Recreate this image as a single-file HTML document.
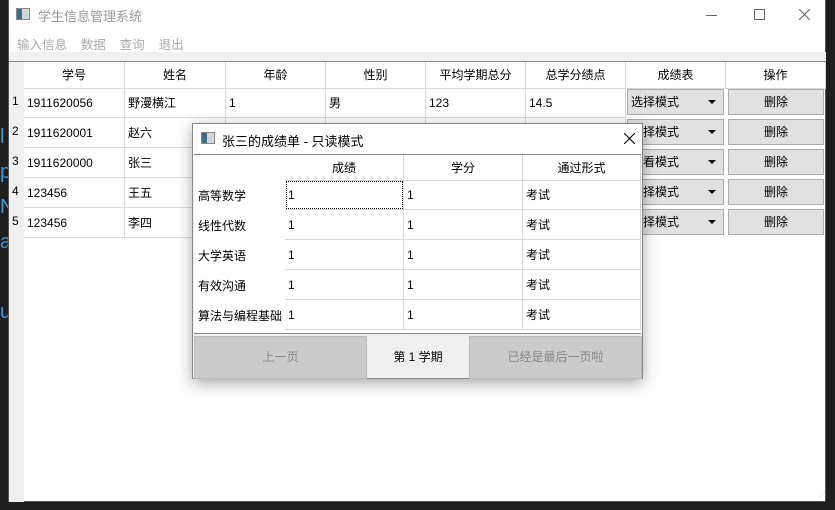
<!DOCTYPE html>
<html><head><meta charset="utf-8"><style>
*{margin:0;padding:0;box-sizing:border-box}
body{width:835px;height:510px;background:#1e1e1e;position:relative;overflow:hidden;font-family:"Liberation Sans","Microsoft YaHei","Noto Sans CJK SC",sans-serif;font-size:12px;color:#000}
.a{position:absolute}
.win{left:8px;top:0;width:818px;height:502px;background:#fff;border:1px solid #555;border-top:none}
.cell{position:absolute;height:30px;line-height:30px;white-space:nowrap;overflow:hidden;border-right:1px solid #d8d8d8;border-bottom:1px solid #d8d8d8}
.hd{text-align:center;height:27px;line-height:26px}
.combo{position:absolute;background:#e1e1e1;border:1px solid #adadad;height:26px;line-height:24px;padding-left:3px}
.btn{position:absolute;background:#e1e1e1;border:1px solid #adadad;height:26px;line-height:24px;text-align:center}
.arrow{position:absolute;right:7px;top:10px;width:0;height:0;border-left:4px solid transparent;border-right:4px solid transparent;border-top:4px solid #000}
</style></head><body>
<div class="a" style="left:0;top:120px;width:8px;height:280px;color:#3a9ad9;font-size:20px;line-height:35px">l<br>p<br>N<br>a<br><br>u</div>
<div class="a win">
 <div class="a" style="left:7px;top:8px;width:14px;height:12px;border:1px solid #888;background:linear-gradient(90deg,#3c6e8c 0 40%,#cfd8dc 40%)"></div>
 <div class="a" style="left:29px;top:6px;color:#999;font-size:13px">学生信息管理系统</div>
 <div class="a" style="left:697px;top:15px;width:11px;height:1px;background:#666"></div>
 <div class="a" style="left:745px;top:9px;width:11px;height:11px;border:1px solid #666"></div>
 <svg class="a" style="left:790px;top:9px" width="11" height="11"><path d="M0 0L11 11M11 0L0 11" stroke="#666" stroke-width="1.1"/></svg>
 <div class="a" style="left:8px;top:34px;color:#aaa;font-size:12.5px">输入信息&nbsp;&nbsp;&nbsp;&nbsp;数据&nbsp;&nbsp;&nbsp;&nbsp;查询&nbsp;&nbsp;&nbsp;&nbsp;退出</div>
 <div class="a" style="left:0;top:52px;width:817px;height:9px;background:#f0f0f0"></div>
 <div class="a" style="left:0;top:61px;width:817px;height:441px;border-top:1px solid #888"></div>
 <div class="a" style="left:0;top:62px;width:15px;height:440px;background:#f0f0f0"></div>
 <div id="t"></div>
</div>
<div class="a" style="left:818px;top:490px;color:#bbb;font-size:8px">⋰</div>

<div class="a" style="left:192px;top:123px;width:451px;height:256px;background:#f0f0f0;border:1px solid #888;box-shadow:0 4px 14px rgba(0,0,0,.35)">
 <div class="a" style="left:0;top:0;width:449px;height:30px;background:#fff"></div>
 <div class="a" style="left:8px;top:8px;width:14px;height:12px;border:1px solid #888;background:linear-gradient(90deg,#3c6e8c 0 40%,#cfd8dc 40%)"></div>
 <div class="a" style="left:29px;top:7px;font-size:13px">张三的成绩单 - 只读模式</div>
 <svg class="a" style="left:431px;top:9px" width="11" height="11"><path d="M0 0L11 11M11 0L0 11" stroke="#000" stroke-width="1.1"/></svg>
 <div class="a" style="left:1px;top:30px;width:447px;height:180px;background:#fff;border-top:1px solid #888;border-bottom:1px solid #888"></div>
 <div id="d"></div>
 <div class="a" style="left:1px;top:212px;width:173px;height:43px;background:#cbcbcb;border:1px solid #bbb;color:#888;text-align:center;line-height:41px">上一页</div>
 <div class="a" style="left:175px;top:212px;width:100px;height:43px;text-align:center;line-height:43px">第 1 学期</div>
 <div class="a" style="left:276px;top:212px;width:173px;height:43px;background:#cbcbcb;border:1px solid #bbb;color:#888;text-align:center;line-height:41px">已经是最后一页啦</div>
</div>
<script>
var t=document.getElementById('t'),h='';
var cols=[15,116,217,317,417,517,617,717,817];
var hdr=['学号','姓名','年龄','性别','平均学期总分','总学分绩点','成绩表','操作'];
for(var i=0;i<8;i++)h+='<div class="cell hd" style="left:'+cols[i]+'px;top:62px;width:'+(cols[i+1]-cols[i])+'px">'+hdr[i]+'</div>';
var rows=[['1911620056','野漫横江','1','男','123','14.5','选择模式'],['1911620001','赵六','','','','','选择模式'],['1911620000','张三','','','','','查看模式'],['123456','王五','','','','','选择模式'],['123456','李四','','','','','选择模式']];
for(var r=0;r<5;r++){var y=88+r*30;
 h+='<div class="a" style="left:3px;top:'+(y+6)+'px">'+(r+1)+'</div>';
 for(var c=0;c<6;c++)h+='<div class="cell" style="left:'+cols[c]+'px;top:'+y+'px;width:'+(cols[c+1]-cols[c])+'px;padding-left:3px">'+rows[r][c]+'</div>';
 h+='<div class="combo" style="left:618px;top:'+(y+1)+'px;width:97px">'+rows[r][6]+'<span class="arrow"></span></div>';
 h+='<div class="btn" style="left:719px;top:'+(y+1)+'px;width:96px">删除</div>';}
t.innerHTML=h;
var d=document.getElementById('d'),g='';
var dc=[92,211,330,448];var dh=['成绩','学分','通过形式'];
for(var i=0;i<3;i++)g+='<div class="cell hd" style="left:'+dc[i]+'px;top:31px;width:'+(dc[i+1]-dc[i])+'px;height:26px">'+dh[i]+'</div>';
var sub=['高等数学','线性代数','大学英语','有效沟通','算法与编程基础'];
for(var r=0;r<5;r++){var y=56+r*30;
 g+='<div class="a" style="left:5px;top:'+(y+7)+'px">'+sub[r]+'</div>';
 var v=['1','1','考试'];
 for(var c=0;c<3;c++)g+='<div class="cell" style="left:'+dc[c]+'px;top:'+y+'px;width:'+(dc[c+1]-dc[c])+'px;padding-left:3px;'+(r==0&&c==0?'outline:1px dotted #000;outline-offset:-2px;':'')+'">'+v[c]+'</div>';}
d.innerHTML=g;
</script>
</body></html>
